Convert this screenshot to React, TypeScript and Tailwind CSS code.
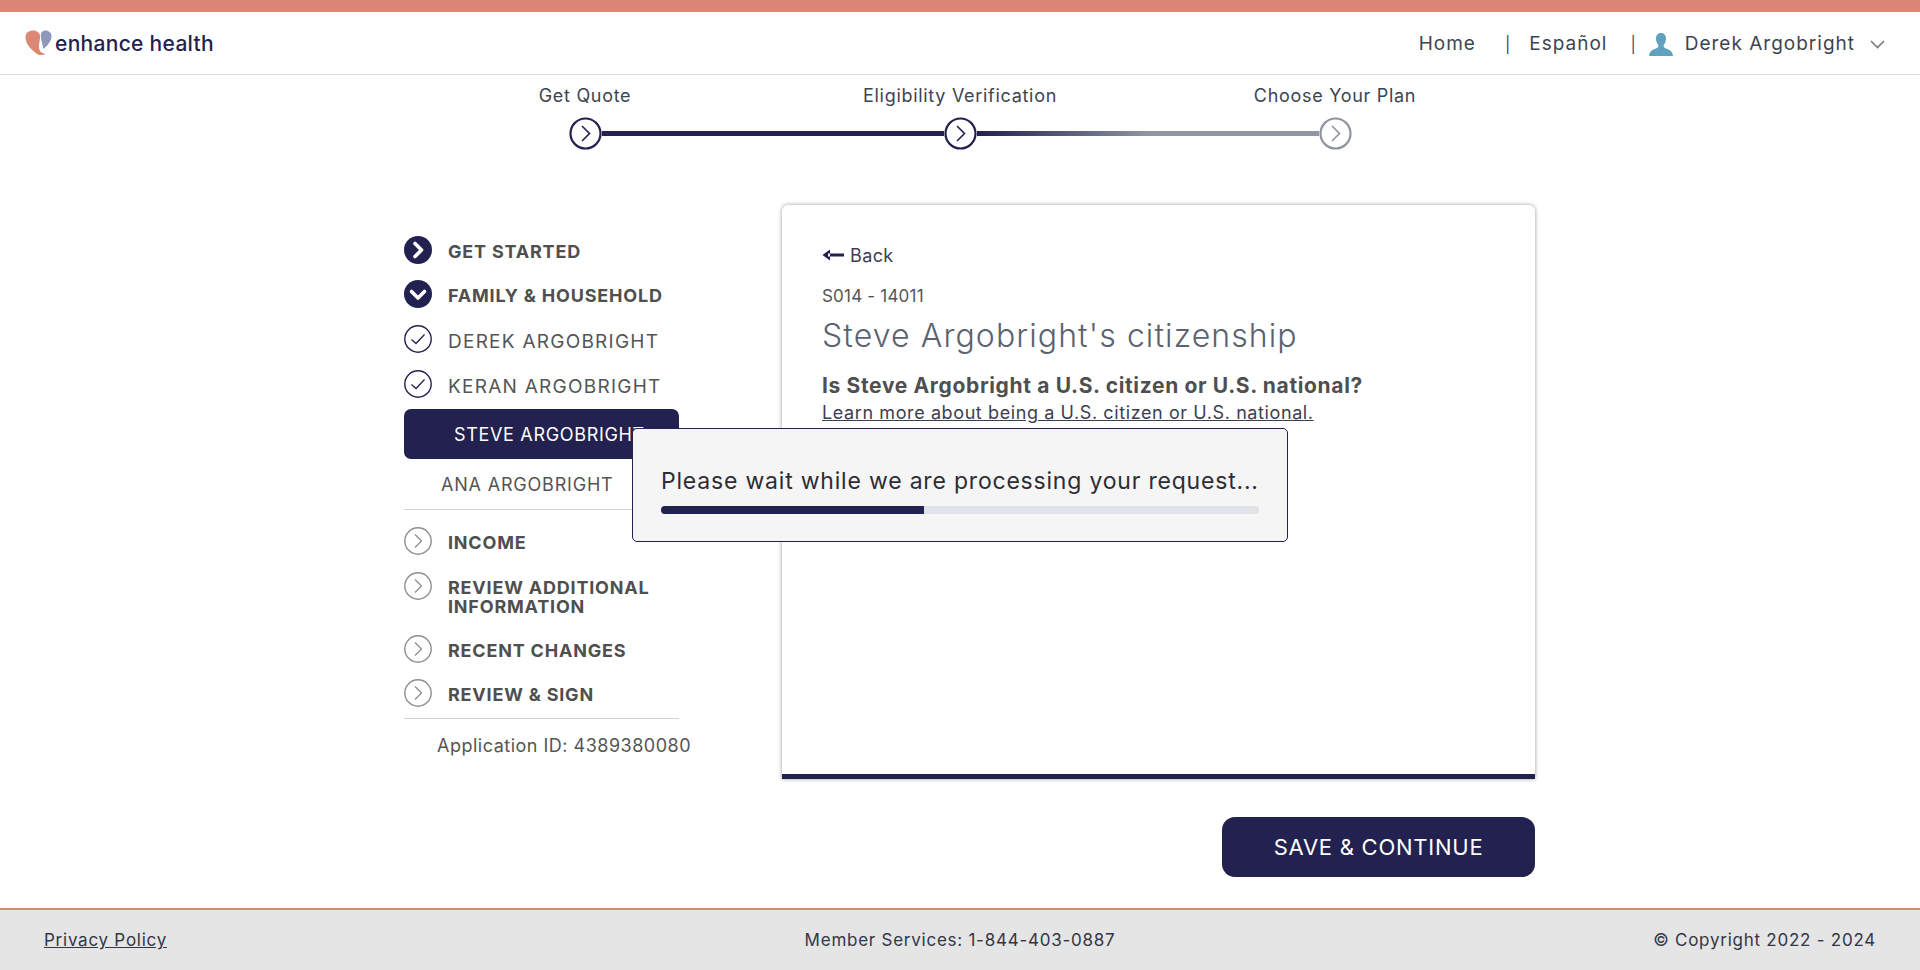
import React from 'react';

const navy = '#22214f';

const CircleIcon = ({ kind }: { kind: 'filled-right' | 'filled-down' | 'check' | 'open' }) => {
  if (kind === 'filled-right' || kind === 'filled-down') {
    return (
      <svg width="28" height="28" viewBox="0 0 28 28" className="shrink-0">
        <circle cx="14" cy="14" r="14" fill={navy} />
        <path
          d={kind === 'filled-right' ? 'M11 7.5 L17.5 14 L11 20.5' : 'M7.5 11.5 L14 18 L20.5 11.5'}
          fill="none"
          stroke="#fff"
          strokeWidth="3.6"
          strokeLinecap="round"
          strokeLinejoin="round"
        />
      </svg>
    );
  }
  const color = kind === 'check' ? navy : '#8f8f8f';
  return (
    <svg width="28" height="28" viewBox="0 0 28 28" className="shrink-0">
      <circle cx="14" cy="14" r="13.2" fill="#fff" stroke={color} strokeWidth="1.4" />
      {kind === 'check' ? (
        <path d="M7.5 14.5 L12 18.5 L20.5 9.5" fill="none" stroke={color} strokeWidth="1.3" />
      ) : (
        <path d="M11 7.5 L17.5 14 L11 20.5" fill="none" stroke={color} strokeWidth="1.3" />
      )}
    </svg>
  );
};

const StepCircle = ({ muted }: { muted?: boolean }) => (
  <svg width="33" height="33" viewBox="0 0 33 33" className="shrink-0">
    <circle cx="16.5" cy="16.5" r="15" fill="#fff" stroke={muted ? '#8e939f' : navy} strokeWidth="2.2" />
    <path d="M13 9 L20.5 16.5 L13 24" fill="none" stroke={muted ? '#8e939f' : navy} strokeWidth="1.6" />
  </svg>
);

const Logo = () => (
  <div className="flex items-center">
    <svg width="28" height="26" viewBox="0 0 28 26" className="shrink-0">
      <path
        d="M8 0.5 C3 0.5 0.5 3.5 0.5 7.5 C0.5 14 6.5 20.5 13 24.5 C15 25.5 20 25.2 20 23.5 C16 24 13.5 20 14 15 C14.5 11 15.5 7 15 5 C14 2 11.5 0.5 8 0.5 Z"
        fill="#dc8875"
      />
      <path
        d="M20.5 0.5 C17.5 0.5 15.8 2.5 15.8 5.5 C15.8 10 17.5 14 18.5 19 C22 16 26.5 11 26.5 6.5 C26.5 3 24 0.5 20.5 0.5 Z"
        fill="#8f97bd"
      />
    </svg>
    <span className="ml-[2px] text-[21px] font-medium tracking-[0.3px] text-[#22214f] leading-none">
      enhance health
    </span>
  </div>
);

const Header = () => (
  <header className="h-[63px] flex items-center justify-between border-b border-[#dcdcdc] pl-[25px] pr-[35px]">
    <Logo />
    <div className="flex items-center pt-[2px] text-[19px] tracking-[1px] text-[#3d4451]">
      <span>Home</span>
      <span className="ml-[29px] text-[#4a3f72] text-[16px]">|</span>
      <span className="ml-[18px]">Español</span>
      <span className="ml-[23px] text-[#4a3f72] text-[16px]">|</span>
      <svg width="24" height="23" viewBox="0 0 24 23" className="ml-[12px] shrink-0">
        <path
          d="M12 0 C8.5 0 7 2.6 7 5.6 C7 8.2 8 10.6 9.4 12 C9.6 13.6 9 14.6 7 15.4 C3.6 16.6 0.6 17.6 0 23 L24 23 C23.4 17.6 20.4 16.6 17 15.4 C15 14.6 14.4 13.6 14.6 12 C16 10.6 17 8.2 17 5.6 C17 2.6 15.5 0 12 0 Z"
          fill="#60a1bd"
        />
      </svg>
      <span className="ml-[12px]">Derek Argobright</span>
      <svg width="15" height="9" viewBox="0 0 15 9" className="ml-[15px] shrink-0">
        <path d="M1 1 L7.5 7.5 L14 1" fill="none" stroke="#7a7a7a" strokeWidth="1.6" />
      </svg>
    </div>
  </header>
);

const Stepper = () => (
  <div className="flex flex-col items-center">
    <div className="flex w-[1125px] mt-[9px] text-[18px] tracking-[0.7px] text-[#3d4451] leading-[24px] text-center">
      <div className="flex-1">Get Quote</div>
      <div className="flex-1">Eligibility Verification</div>
      <div className="flex-1">Choose Your Plan</div>
    </div>
    <div className="flex items-center mt-[9px]">
      <StepCircle />
      <div className="w-[342px] h-[5px] bg-[#22214f]" />
      <StepCircle />
      <div className="w-[342px] h-[5px] bg-gradient-to-r from-[#22214f] to-[#8f95a1] to-[50%]" />
      <StepCircle muted />
    </div>
  </div>
);

const SectionRow = ({ icon, label, className }: { icon: React.ComponentProps<typeof CircleIcon>['kind']; label: React.ReactNode; className?: string }) => (
  <div className={`flex items-start gap-[16px] ${className ?? ''}`}>
    <CircleIcon kind={icon} />
    <div className="pt-[6px] text-[18px] font-bold tracking-[0.8px] leading-[19px] text-[#4f4f4f]">{label}</div>
  </div>
);

const PersonRow = ({ label, className }: { label: string; className?: string }) => (
  <div className={`flex items-start gap-[16px] ${className ?? ''}`}>
    <CircleIcon kind="check" />
    <div className="pt-[6px] text-[19px] tracking-[1.25px] leading-[21.5px] text-[#555]">{label}</div>
  </div>
);

const Sidebar = () => (
  <aside className="w-[377px] shrink-0 pt-[31px]">
    <div className="w-[275px]">
      <SectionRow icon="filled-right" label="GET STARTED" />
      <SectionRow icon="filled-down" label="FAMILY & HOUSEHOLD" className="mt-[16px]" />
      <PersonRow label="DEREK ARGOBRIGHT" className="mt-[17px]" />
      <PersonRow label="KERAN ARGOBRIGHT" className="mt-[17px]" />
      <div className="mt-[11px] h-[50px] rounded-[7px] bg-[#22214f] pl-[50px] flex items-center text-[18px] tracking-[0.67px] text-white">
        STEVE ARGOBRIGHT
      </div>
      <div className="pl-[37px] mt-[14px] text-[18px] tracking-[0.8px] leading-[24px] text-[#555]">ANA ARGOBRIGHT</div>
      <div className="mt-[12px] border-t border-[#d4d4d4]" />
      <SectionRow icon="open" label="INCOME" className="mt-[17px]" />
      <SectionRow icon="open" label={<>REVIEW ADDITIONAL<br />INFORMATION</>} className="mt-[17px]" />
      <SectionRow icon="open" label="RECENT CHANGES" className="mt-[19px]" />
      <SectionRow icon="open" label="REVIEW & SIGN" className="mt-[16px]" />
      <div className="mt-[11px] border-t border-[#d4d4d4]" />
      <div className="pl-[33px] mt-[15px] text-[18px] tracking-[0.5px] leading-[24px] text-[#555] whitespace-nowrap">
        Application ID: 4389380080
      </div>
    </div>
  </aside>
);

const QuestionCard = () => (
  <section className="w-[753px] ml-[1px] h-[574px] bg-white rounded-t-[6px] border-b-[5px] border-[#22214f] shadow-[0_0_4px_rgba(0,0,0,0.4)] pl-[40px] pt-[40px]">
    <div className="flex items-center gap-[6px] h-[20px] text-[18px] tracking-[0.4px] text-[#3d3d52]">
      <svg width="22" height="12" viewBox="0 0 22 12" className="shrink-0">
        <path d="M8 0.5 L0.5 6 L8 11.5 Z M6 4.6 H22 V7.4 H6 Z" fill="#22214f" />
      </svg>
      Back
    </div>
    <div className="mt-[20px] text-[17px] leading-[22px] tracking-[0.2px] text-[#555]">S014 - 14011</div>
    <h1 className="mt-[7px] text-[32px] font-light leading-[44px] tracking-[1.1px] text-[#5b6270]">
      Steve Argobright's citizenship
    </h1>
    <div className="mt-[15px] text-[21px] font-bold leading-[26px] tracking-[0.65px] text-[#4f4f4f]">
      Is Steve Argobright a U.S. citizen or U.S. national?
    </div>
    <a href="#" className="block w-fit mt-[2px] text-[18px] leading-[24px] tracking-[0.6px] text-[#3d3d52] underline">
      Learn more about being a U.S. citizen or U.S. national.
    </a>
  </section>
);

const ProcessingDialog = () => (
  <div className="absolute left-[632px] top-[428px] w-[656px] h-[114px] rounded-[5px] border border-[#22214f] bg-[#f5f5f6] px-[28px] pt-[37px]">
    <div className="text-[23px] leading-[30px] tracking-[0.8px] text-[#2d2d33] whitespace-nowrap">
      Please wait while we are processing your request...
    </div>
    <div className="mt-[10px] h-[8px] rounded-[4px] bg-[#dfe2e6] overflow-hidden">
      <div className="h-full w-[44%] bg-[#22214f]" />
    </div>
  </div>
);

const Footer = () => (
  <footer className="h-[62px] shrink-0 border-t-2 border-[#db8674] bg-[#e5e5e5] flex items-center pl-[44px] pr-[44px] pt-[2px] text-[17px] tracking-[0.75px] text-[#333645]">
    <a href="#" className="w-[400px] underline">Privacy Policy</a>
    <div className="flex-1 text-center">Member Services: 1-844-403-0887</div>
    <div className="w-[400px] text-right">© Copyright 2022 - 2024</div>
  </footer>
);

export default function App() {
  return (
    <div className="relative h-[970px] flex flex-col overflow-hidden bg-white" style={{ fontFamily: "Inter, 'Noto Sans', sans-serif" }}>
      <div className="h-[12px] shrink-0 bg-[#db8674]" />
      <Header />
      <Stepper />
      <main className="flex-1 flex flex-col items-center pt-[55px] pl-[19px]">
        <div className="w-[1131px] flex">
          <Sidebar />
          <QuestionCard />
        </div>
        <div className="w-[1131px] flex justify-end mt-[38px]">
          <button className="w-[313px] h-[60px] rounded-[13px] bg-[#22214f] text-[22px] tracking-[0.75px] text-white">
            SAVE & CONTINUE
          </button>
        </div>
      </main>
      <Footer />
      <ProcessingDialog />
    </div>
  );
}
